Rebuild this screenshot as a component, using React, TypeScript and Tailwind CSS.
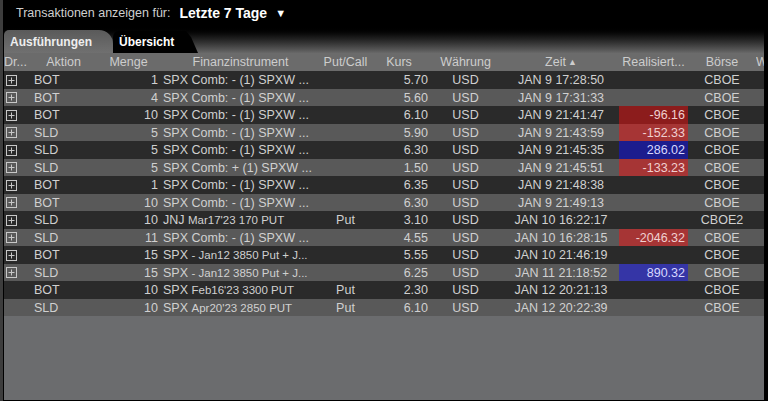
import React from 'react';

type Row = {
  action: string;
  qty: string;
  sym: string;
  desc: string;
  small?: boolean;
  pc?: string;
  price: string;
  time: string;
  pnl?: string;
  tone?: 'red' | 'blue';
  ex?: string;
  icon?: boolean;
};

const COMB = 'Comb: - (1) SPXW ...';

const rows: Row[] = [
  { action: 'BOT', qty: '1', sym: 'SPX', desc: COMB, price: '5.70', time: 'JAN 9 17:28:50', icon: true },
  { action: 'BOT', qty: '4', sym: 'SPX', desc: COMB, price: '5.60', time: 'JAN 9 17:31:33', icon: true },
  { action: 'BOT', qty: '10', sym: 'SPX', desc: COMB, price: '6.10', time: 'JAN 9 21:41:47', pnl: '-96.16', tone: 'red', icon: true },
  { action: 'SLD', qty: '5', sym: 'SPX', desc: COMB, price: '5.90', time: 'JAN 9 21:43:59', pnl: '-152.33', tone: 'red', icon: true },
  { action: 'SLD', qty: '5', sym: 'SPX', desc: COMB, price: '6.30', time: 'JAN 9 21:45:35', pnl: '286.02', tone: 'blue', icon: true },
  { action: 'SLD', qty: '5', sym: 'SPX', desc: 'Comb: + (1) SPXW ...', price: '1.50', time: 'JAN 9 21:45:51', pnl: '-133.23', tone: 'red', icon: true },
  { action: 'BOT', qty: '1', sym: 'SPX', desc: COMB, price: '6.35', time: 'JAN 9 21:48:38', icon: true },
  { action: 'BOT', qty: '10', sym: 'SPX', desc: COMB, price: '6.30', time: 'JAN 9 21:49:13', icon: true },
  { action: 'SLD', qty: '10', sym: 'JNJ', desc: "Mar17'23 170 PUT", small: true, pc: 'Put', price: '3.10', time: 'JAN 10 16:22:17', ex: 'CBOE2', icon: true },
  { action: 'SLD', qty: '11', sym: 'SPX', desc: COMB, price: '4.55', time: 'JAN 10 16:28:15', pnl: '-2046.32', tone: 'red', icon: true },
  { action: 'BOT', qty: '15', sym: 'SPX', desc: '- Jan12 3850 Put + J...', small: true, price: '5.55', time: 'JAN 10 21:46:19', icon: true },
  { action: 'SLD', qty: '15', sym: 'SPX', desc: '- Jan12 3850 Put + J...', small: true, price: '6.25', time: 'JAN 11 21:18:52', pnl: '890.32', tone: 'blue', icon: true },
  { action: 'BOT', qty: '10', sym: 'SPX', desc: "Feb16'23 3300 PUT", small: true, pc: 'Put', price: '2.30', time: 'JAN 12 20:21:13' },
  { action: 'SLD', qty: '10', sym: 'SPX', desc: "Apr20'23 2850 PUT", small: true, pc: 'Put', price: '6.10', time: 'JAN 12 20:22:39' },
];

const cols = 'grid grid-cols-[26px_67px_63px_161px_49px_58px_75px_116px_69px_68px_1fr]';

function Expand() {
  return (
    <svg width="11" height="11" viewBox="0 0 11 11" className="ml-[2px]">
      <rect x="0.5" y="0.5" width="10" height="10" fill="none" stroke="#c8c8c8" strokeWidth="1" />
      <path d="M5.5 2.5v6M2.5 5.5h6" stroke="#c8c8c8" strokeWidth="1" />
    </svg>
  );
}

function pnlClass(tone: Row['tone'], dark: boolean) {
  if (tone === 'red') return dark ? 'bg-[#8c1c1c] text-[#f0d0d0]' : 'bg-[#a63535] text-[#f0d0d0]';
  if (tone === 'blue') return dark ? 'bg-[#1c1c8e] text-[#d8d8ff]' : 'bg-[#3535a6] text-[#d8d8ff]';
  return '';
}

export default function App() {
  return (
    <div className="flex h-[401px] w-[768px] overflow-hidden bg-black font-['Liberation_Sans',Arial,sans-serif]">
      <div className="w-[3px] bg-[#3d3d3d]" />
      <div className="w-[1px] bg-black" />
      <div className="flex flex-1 flex-col pb-[1px] pr-[4px]">
        <div className="flex h-[26px] items-center bg-black pl-[12px]">
          <span className="text-[12.5px] text-[#cfcfcf]">Transaktionen anzeigen für:</span>
          <span className="ml-[9px] text-[14px] font-bold text-white">Letzte 7 Tage</span>
          <span className="ml-[8px] text-[11px] text-white">▼</span>
        </div>

        <div className="flex h-[27px] items-end bg-gradient-to-b from-black to-[#686868]">
          <div className="flex h-[23px] w-[109px] items-center rounded-tl-[5px] rounded-tr-[14px] bg-gradient-to-b from-[#5a5a5a] to-[#707070] pl-[6px] text-[12px] font-bold text-[#eeeeee]">
            Ausführungen
          </div>
          <div className="flex h-[22px] items-end">
            <div className="flex h-[22px] w-[70px] items-center rounded-tl-[6px] bg-black pl-[6px] text-[12px] font-bold text-white">
              Übersicht
            </div>
            <div className="h-[22px] w-[15px] bg-black [clip-path:polygon(0_0,20%_0,55%_30%,100%_100%,0_100%)]" />
          </div>
        </div>

        <div className={`${cols} h-[18px] items-center bg-[#6b6b6b] text-[12.5px] text-[#cdcdcd]`}>
          <div className="truncate">Dr...</div>
          <div className="text-center">Aktion</div>
          <div className="text-center">Menge</div>
          <div className="text-center">Finanzinstrument</div>
          <div className="text-center">Put/Call</div>
          <div className="text-center">Kurs</div>
          <div className="text-center">Währung</div>
          <div className="flex items-center justify-center gap-[2px]">
            Zeit<span className="text-[9px]">▲</span>
          </div>
          <div className="text-center">Realisiert...</div>
          <div className="text-center">Börse</div>
          <div className="overflow-hidden whitespace-nowrap">W</div>
        </div>

        {rows.map((r, i) => {
          const dark = i % 2 === 0;
          return (
            <div
              key={i}
              className={`${cols} h-[17.5px] items-center whitespace-nowrap text-[12.5px] text-[#d0d0d0] ${dark ? 'bg-[#2a2a2a]' : 'bg-[#595959]'}`}
            >
              <div className="flex items-center">{r.icon && <Expand />}</div>
              <div className="pl-[4px]">{r.action}</div>
              <div className="pr-[2px] text-right">{r.qty}</div>
              <div className="overflow-hidden pl-[3px]">
                {r.sym} <span className={r.small ? 'text-[11.5px]' : ''}>{r.desc}</span>
              </div>
              <div className="text-center">{r.pc ?? ''}</div>
              <div className="text-right">{r.price}</div>
              <div className="text-center">USD</div>
              <div className="text-center">{r.time}</div>
              <div className={`flex h-full items-center justify-end pr-[3px] ${pnlClass(r.tone, dark)}`}>{r.pnl ?? ''}</div>
              <div className="text-center">{r.ex ?? 'CBOE'}</div>
              <div />
            </div>
          );
        })}

        <div className="flex-1 bg-[#6b6c6e]" />
      </div>
    </div>
  );
}
